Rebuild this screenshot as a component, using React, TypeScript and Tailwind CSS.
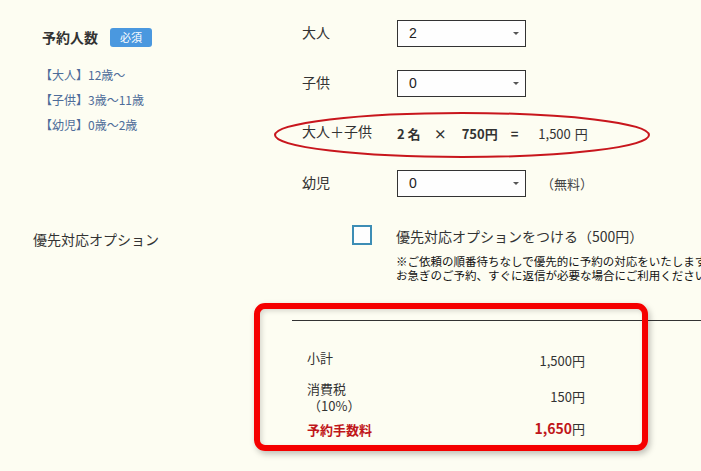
import React from 'react';

const font = { fontFamily: '"Noto Sans CJK JP", "Noto Sans", "Liberation Sans", sans-serif' };

function SelectBox({ value }: { value: string }) {
  return (
    <div className="w-[129px] h-[27px] border border-[#333] bg-[#fefefe] flex items-center justify-between pl-[11px] pr-[6px] shrink-0">
      <span className="text-[14px] text-[#222]" style={{ fontFamily: '"Liberation Sans", sans-serif' }}>{value}</span>
      <span className="w-0 h-0 border-l-[3px] border-r-[3px] border-t-[3px] border-l-transparent border-r-transparent border-t-[#555]" />
    </div>
  );
}

export default function App() {
  return (
    <div className="relative w-[701px] h-[471px] overflow-hidden bg-[#fdfdf2] text-[#333]" style={font}>
      {/* 人数 */}
      <div className="flex">
        <div className="w-[302px] shrink-0 pl-[42px] pt-[27px]">
          <div className="flex items-center">
            <span className="text-[14px] font-bold text-[#333]">予約人数</span>
            <span className="ml-[12px] w-[42px] h-[19px] rounded-[3px] bg-[#4a98df] text-white text-[11px] flex items-center justify-center">必須</span>
          </div>
          <div className="mt-[14px] -ml-[2px] text-[12px] text-[#4d6c99] leading-[25px]">
            <div>【大人】12歳～</div>
            <div>【子供】3歳～11歳</div>
            <div>【幼児】0歳～2歳</div>
          </div>
        </div>
        <div className="pt-[20px] flex flex-col gap-[23px]">
          <div className="flex items-center h-[27px]">
            <span className="w-[95px] shrink-0 text-[14px] -mt-[2px]">大人</span>
            <SelectBox value="2" />
          </div>
          <div className="flex items-center h-[27px]">
            <span className="w-[95px] shrink-0 text-[14px] -mt-[2px]">子供</span>
            <SelectBox value="0" />
          </div>
          <div className="flex items-center h-[27px]">
            <span className="w-[95px] shrink-0 text-[14px] -mt-[4px]">大人＋子供</span>
            <span className="text-[13px] font-bold flex items-center whitespace-nowrap">
              <span>2 名</span>
              <span className="ml-[13px]">×</span>
              <span className="ml-[15px]">750円</span>
              <span className="ml-[13px]">=</span>
              <span className="ml-[20px] font-normal">1,500<span className="ml-[4px]">円</span></span>
            </span>
          </div>
          <div className="flex items-center h-[27px]">
            <span className="w-[95px] shrink-0 text-[14px] -mt-[2px]">幼児</span>
            <SelectBox value="0" />
            <span className="ml-[15px] text-[13px] text-[#444]">（無料）</span>
          </div>
        </div>
      </div>

      {/* 優先対応 */}
      <div className="flex mt-[28px]">
        <div className="w-[352px] shrink-0 pl-[33px] pt-[4px] text-[14px] text-[#333]">優先対応オプション</div>
        <div className="w-[20px] h-[20px] shrink-0 border-2 border-[#3d8db5] bg-[#fefefe]" />
        <div className="ml-[24px] shrink-0 whitespace-nowrap">
          <div className="text-[14px] leading-[20px] mt-[1px]">優先対応オプションをつける（500円）</div>
          <div className="mt-[8px] text-[11.5px] leading-[14px] text-[#111]">
            <div>※ご依頼の順番待ちなしで優先的に予約の対応をいたします。</div>
            <div>お急ぎのご予約、すぐに返信が必要な場合にご利用ください。</div>
          </div>
        </div>
      </div>

      {/* 合計 */}
      <div className="ml-[292px] mt-[38px] border-t border-[#333]" />
      <div className="ml-[307px] w-[278px] mt-[29px] flex flex-col">
        <div className="flex items-center justify-between h-[22px]">
          <span className="text-[13px] -mt-[6px]">小計</span>
          <span className="text-[13px]">1,500円</span>
        </div>
        <div className="flex items-center justify-between mt-[8px]">
          <div className="text-[13px] leading-[17px]">
            <div>消費税</div>
            <div className="pl-[1px]">（10%）</div>
          </div>
          <span className="text-[13px]">150円</span>
        </div>
        <div className="flex items-center justify-between mt-[3px] h-[22px]">
          <span className="text-[13px] font-bold text-[#c0161a] mt-[4px]">予約手数料</span>
          <span className="text-[13px]">
            <span className="font-bold text-[#c0161a] text-[14px]">1,650</span>円
          </span>
        </div>
      </div>

      {/* 注釈 */}
      <svg className="absolute left-[270px] top-[108px] pointer-events-none" width="390" height="56" viewBox="0 0 390 56">
        <ellipse cx="192" cy="27" rx="187" ry="22" fill="none" stroke="#c8161d" strokeWidth="2" />
      </svg>
      <div className="absolute left-[254px] top-[303px] w-[394px] h-[148px] border-[6px] border-[#f50000] rounded-[11px] shadow-[2px_3px_6px_rgba(0,0,0,0.25),inset_2px_2px_5px_rgba(0,0,0,0.15)] pointer-events-none" />
    </div>
  );
}
